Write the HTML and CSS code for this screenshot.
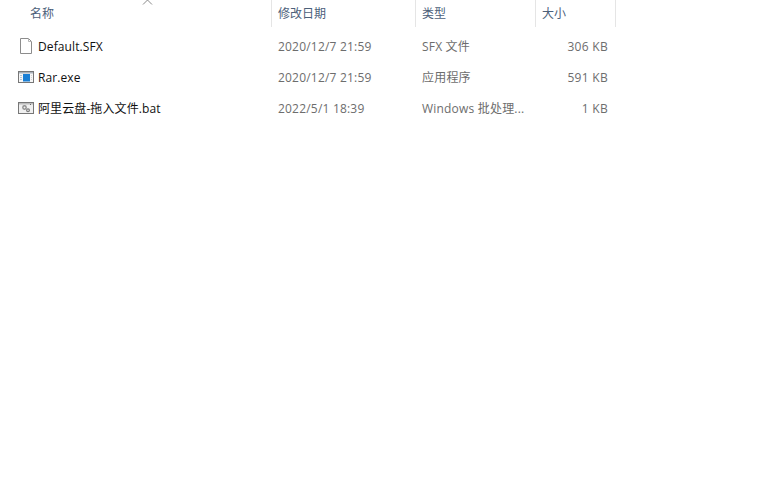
FILE: index.html
```html
<!DOCTYPE html>
<html lang="zh-CN">
<head>
<meta charset="utf-8">
<title>文件列表</title>
<link rel="stylesheet" href="styles.css">
</head>
<body>
<div class="list">
  <div class="row head">
    <div class="cell name-h">名称<svg class="sort" width="11" height="6" viewBox="0 0 11 6"><path d="M1 5.5 L5.5 1 L10 5.5" fill="none" stroke="#8a8a8a" stroke-width="1"/></svg></div>
    <div class="cell">修改日期</div>
    <div class="cell">类型</div>
    <div class="cell">大小</div>
  </div>
  <div class="row item">
    <div class="cell name">
      <svg class="icon" width="16" height="17" viewBox="0 0 16 17"><path d="M2.5 0.5H10.5L13.5 3.5V15.5H2.5Z" fill="#fff" stroke="#8c8c8c"/><path d="M10.5 0.5V3.5H13.5" fill="none" stroke="#b5b5b5"/></svg>
      <span class="fname">Default.SFX</span>
    </div>
    <div class="cell date">2020/12/7 21:59</div>
    <div class="cell type">SFX 文件</div>
    <div class="cell size">306 KB</div>
  </div>
  <div class="row item">
    <div class="cell name">
      <svg class="icon" width="16" height="17" viewBox="0 0 16 17"><rect x="0.5" y="2.5" width="15" height="11" fill="#f6f6f6" stroke="#777"/><rect x="1" y="3" width="14" height="1.5" fill="#a9b2bb"/><rect x="5" y="5" width="7" height="7.5" fill="#1a7fd4"/><path d="M2 6.5h2M2 8.5h2M2 10.5h2" stroke="#b4c6d6"/><path d="M13 6.5h1M13 8.5h1M13 10.5h1" stroke="#d5d5d5"/></svg>
      <span class="fname">Rar.exe</span>
    </div>
    <div class="cell date">2020/12/7 21:59</div>
    <div class="cell type">应用程序</div>
    <div class="cell size">591 KB</div>
  </div>
  <div class="row item">
    <div class="cell name">
      <svg class="icon" width="16" height="17" viewBox="0 0 16 17"><rect x="0.5" y="2.5" width="15" height="11" fill="#f0f0f0" stroke="#777"/><rect x="1" y="3" width="14" height="1.5" fill="#bcbcbc"/><circle cx="6.5" cy="7.5" r="1.7" fill="none" stroke="#8d8d8d" stroke-width="1.4"/><circle cx="10" cy="10.3" r="1.4" fill="none" stroke="#7c7c7c" stroke-width="1.2"/><rect x="12" y="4" width="1" height="1" fill="#666"/></svg>
      <span class="fname cjk">阿里云盘-拖入文件.bat</span>
    </div>
    <div class="cell date">2022/5/1 18:39</div>
    <div class="cell type">Windows 批处理...</div>
    <div class="cell size">1 KB</div>
  </div>
</div>
</body>
</html>
```
FILE: styles.css
```css
html, body {
  margin: 0;
  background: #fff;
}
body {
  width: 781px;
  height: 490px;
  overflow: hidden;
  font-family: "Open Sans", "Noto Sans CJK SC", sans-serif;
  font-size: 12px;
  color: #6d6d6d;
}
.row {
  display: grid;
  grid-template-columns: 272px 144px 120px 80px;
}
.head {
  height: 27px;
  margin-bottom: 4px;
  color: #4c607a;
}
.head .cell {
  position: relative;
  padding-left: 6px;
  padding-bottom: 1px;
  border-right: 1px solid #e5e5e5;
  display: flex;
  align-items: center;
  box-sizing: border-box;
}
.head .name-h {
  padding-left: 30px;
}
.sort {
  position: absolute;
  left: 142px;
  top: -1px;
}
.item {
  height: 31px;
  align-items: center;
}
.item .cell {
  padding-left: 6px;
  white-space: nowrap;
  line-height: 16px;
}
.item .name {
  padding-left: 18px;
  display: flex;
  align-items: center;
  gap: 4px;
  color: #111;
}
.icon {
  flex: none;
}
.fname {
  letter-spacing: 0.1px;
}
.date {
  letter-spacing: 0.2px;
}
.type {
  letter-spacing: 0.2px;
}
.item .size {
  text-align: right;
  padding-right: 8px;
  letter-spacing: 0.3px;
}
```
